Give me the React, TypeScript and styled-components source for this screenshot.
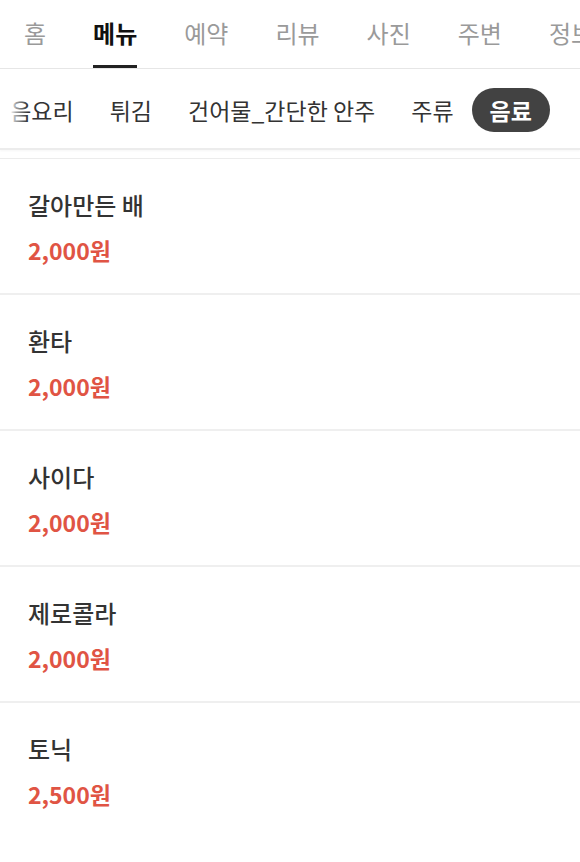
import React from "react";
import styled, { createGlobalStyle } from "styled-components";

const GlobalStyle = createGlobalStyle`
    html, body {
        margin: 0;
        padding: 0;
        background: #fff;
        font-family: "Noto Sans CJK KR", "Noto Sans", sans-serif;
        -webkit-font-smoothing: antialiased;
    }
`;

const Page = styled.div`
    width: 580px;
    overflow: hidden;
`;

const TabBar = styled.nav`
    display: flex;
    height: 68px;
    padding-left: 24px;
    gap: 47px;
    border-bottom: 1px solid #e6e6e6;
    white-space: nowrap;
    overflow: hidden;
`;

const Tab = styled.div<{ $active?: boolean }>`
    position: relative;
    display: flex;
    align-items: center;
    height: 100%;
    padding-bottom: 4px;
    box-sizing: border-box;
    font-size: 24px;
    font-weight: ${(p) => (p.$active ? 700 : 400)};
    color: ${(p) => (p.$active ? "#111" : "#9a9a9a")};

    &::after {
        content: "";
        display: ${(p) => (p.$active ? "block" : "none")};
        position: absolute;
        left: 0;
        right: 0;
        bottom: 0;
        height: 3px;
        background: #222;
    }
`;

const CategoryBar = styled.div`
    position: relative;
    height: 79px;
    border-bottom: 2px solid #ececec;
    box-shadow: 0 1px 2px rgba(0, 0, 0, 0.04);
    overflow: hidden;
`;

const CategoryTrack = styled.div`
    display: flex;
    align-items: center;
    height: 100%;
    margin-left: -29px;
    white-space: nowrap;
`;

const Fade = styled.div`
    position: absolute;
    top: 0;
    left: 0;
    bottom: 0;
    width: 28px;
    background: linear-gradient(
        to right,
        rgba(255, 255, 255, 1) 0,
        rgba(255, 255, 255, 1) 10px,
        rgba(255, 255, 255, 0.55) 16px,
        rgba(255, 255, 255, 0) 28px
    );
`;

const Chip = styled.div<{ $active?: boolean }>`
    display: flex;
    align-items: center;
    height: 44px;
    margin-top: 2px;
    padding: 0 18px;
    border-radius: 22px;
    font-size: 23px;
    font-weight: ${(p) => (p.$active ? 700 : 400)};
    color: ${(p) => (p.$active ? "#fff" : "#333")};
    background: ${(p) => (p.$active ? "#424242" : "transparent")};
`;

const Spacer = styled.div`
    height: 8px;
    border-bottom: 1px solid #ececec;
`;

const MenuList = styled.ul`
    list-style: none;
    margin: 0;
    padding: 0;
`;

const MenuItem = styled.li`
    padding: 30px 28px 29px;
    border-bottom: 2px solid #efefef;

    &:last-child {
        border-bottom: none;
    }
`;

const ItemName = styled.div`
    font-size: 24px;
    line-height: 32px;
    font-weight: 500;
    color: #333;
`;

const ItemPrice = styled.div`
    margin-top: 15px;
    font-size: 23px;
    line-height: 28px;
    font-weight: 700;
    color: #e05444;
`;

const tabs = ["홈", "메뉴", "예약", "리뷰", "사진", "주변", "정보"];
const categories = ["볶음요리", "튀김", "건어물_간단한 안주", "주류", "음료"];
const items = [
    { name: "갈아만든 배", price: "2,000원" },
    { name: "환타", price: "2,000원" },
    { name: "사이다", price: "2,000원" },
    { name: "제로콜라", price: "2,000원" },
    { name: "토닉", price: "2,500원" },
];

const App = (): JSX.Element => {
    return (
        <Page>
            <GlobalStyle />
            <TabBar>
                {tabs.map((t) => (
                    <Tab key={t} $active={t === "메뉴"}>
                        {t}
                    </Tab>
                ))}
            </TabBar>
            <CategoryBar>
                <CategoryTrack>
                    {categories.map((c) => (
                        <Chip key={c} $active={c === "음료"}>
                            {c}
                        </Chip>
                    ))}
                </CategoryTrack>
                <Fade />
            </CategoryBar>
            <Spacer />
            <MenuList>
                {items.map((item) => (
                    <MenuItem key={item.name}>
                        <ItemName>{item.name}</ItemName>
                        <ItemPrice>{item.price}</ItemPrice>
                    </MenuItem>
                ))}
            </MenuList>
        </Page>
    );
};

export default App;
